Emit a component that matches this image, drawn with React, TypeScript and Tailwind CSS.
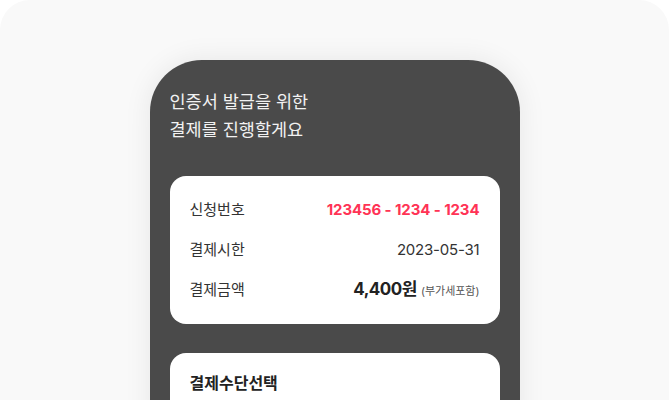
const font = { fontFamily: 'Inter, "Noto Sans CJK KR", "Noto Sans", sans-serif' };

function InfoRow({ label, children }: { label: string; children: React.ReactNode }) {
  return (
    <div className="flex h-5 items-center justify-between">
      <span className="text-[15px] text-[#333]">{label}</span>
      {children}
    </div>
  );
}

export default function App() {
  return (
    <div className="h-[400px] w-[670px] overflow-hidden bg-white" style={font}>
      <div className="flex h-[430px] w-[669px] justify-center rounded-[30px] bg-[#f9f9f9] pt-[60px]">
        <div className="flex w-[370px] flex-col rounded-t-[52px] bg-[#4a4a4a] px-5 pt-[28px] shadow-[0_0_28px_rgba(0,0,0,0.08)]">
          <h1 className="text-[17.5px] font-normal leading-[28px] text-[#f2f2f2]">
            인증서 발급을 위한
            <br />
            결제를 진행할게요
          </h1>

          <div className="mt-[32px] flex flex-col gap-5 rounded-2xl bg-white px-5 py-6">
            <InfoRow label="신청번호">
              <span className="text-[15px] font-bold tracking-[-0.1px] text-[#ff3355]">123456 - 1234 - 1234</span>
            </InfoRow>
            <InfoRow label="결제시한">
              <span className="text-[15px] tracking-[-0.2px] text-[#333]">2023-05-31</span>
            </InfoRow>
            <InfoRow label="결제금액">
              <span className="flex items-baseline gap-1">
                <span className="text-[17px] font-bold tracking-[-0.5px] text-[#222]">4,400원</span>
                <span className="text-[11px] text-[#555]">(부가세포함)</span>
              </span>
            </InfoRow>
          </div>

          <div className="mt-[29px] h-[80px] rounded-t-2xl bg-white px-5 pt-[18px]">
            <h2 className="text-[16px] font-bold leading-6 text-[#222]">결제수단선택</h2>
          </div>
        </div>
      </div>
    </div>
  );
}
